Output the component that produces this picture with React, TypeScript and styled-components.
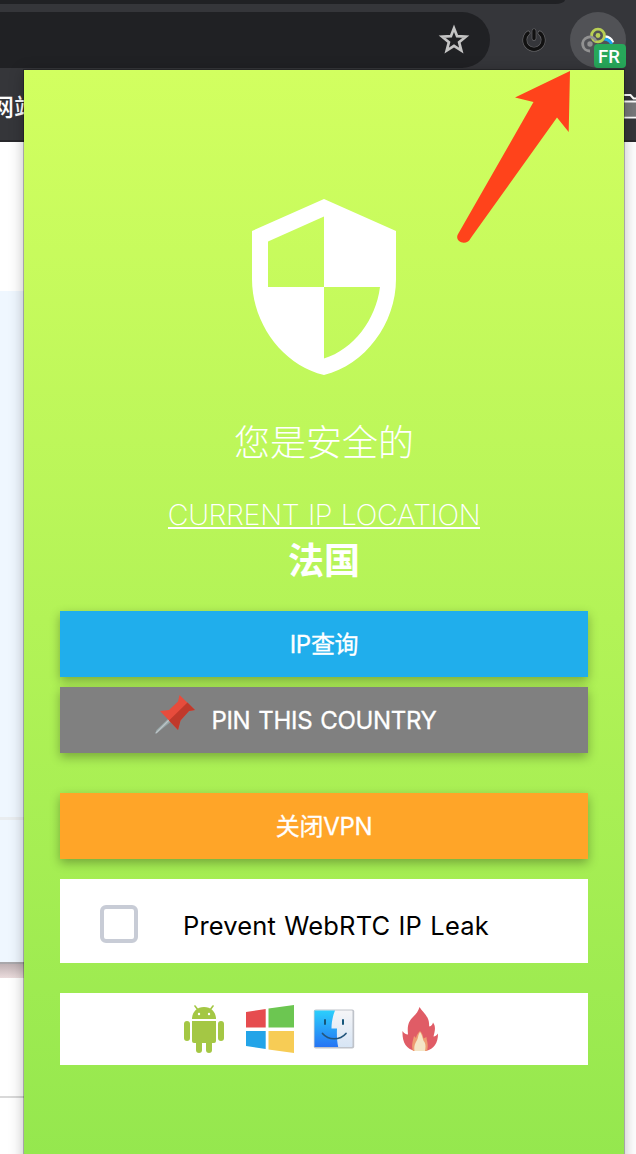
import React from "react";
import styled, { createGlobalStyle } from "styled-components";

const GlobalStyle = createGlobalStyle`
  * { box-sizing: border-box; }
  body {
    margin: 0;
    background: #fff;
    font-family: Inter, "Noto Sans CJK SC", sans-serif;
  }
`;

const Screen = styled.div`
  position: relative;
  width: 636px;
  height: 1154px;
  overflow: hidden;
`;

const Chrome = styled.header`
  height: 142px;
  background: #35363a;
  border-bottom: 2px solid #29292c;
`;

const TabStrip = styled.div`
  width: 565px;
  height: 4px;
  background: #202124;
  border-bottom-right-radius: 10px 4px;
`;

const Toolbar = styled.div`
  display: flex;
  align-items: center;
  height: 56px;
  margin-top: 8px;
`;

const AddressBar = styled.div`
  display: flex;
  align-items: center;
  justify-content: flex-end;
  width: 490px;
  height: 56px;
  padding-right: 20px;
  background: #202124;
  border-radius: 0 28px 28px 0;
`;

const PowerButton = styled.div`
  display: flex;
  margin-left: 30px;
`;

const ExtensionButton = styled.div`
  position: relative;
  width: 56px;
  height: 56px;
  margin-left: 22px;
  border-radius: 50%;
  background: #515256;
  svg { display: block; }
`;

const CountryBadge = styled.span`
  position: absolute;
  right: 0;
  bottom: 0;
  width: 32px;
  height: 24px;
  border-radius: 4px;
  background: #27a85a;
  color: #fff;
  font: 500 18.5px/27px Roboto, sans-serif;
  text-align: center;
  text-indent: -2px;
`;

const Bookmarks = styled.div`
  display: flex;
  justify-content: space-between;
  align-items: center;
  height: 72px;
  padding-top: 6px;
  color: #fff;
  font-size: 24px;
  font-weight: 500;
  line-height: 36px;
`;

const BookmarkName = styled.span`
  margin: 2px 0 0 -10px;
`;

const PageBody = styled.main`
  width: 40px;
  height: 1012px;
  padding-top: 149px;
`;

const BluePanel = styled.div<{ $height: number }>`
  height: ${(p) => p.$height}px;
  background: #eff7ff;
`;

const Rule = styled.div<{ $color: string; $size: number }>`
  height: ${(p) => p.$size}px;
  background: ${(p) => p.$color};
`;

const FadeBand = styled.div`
  height: 14px;
  margin-bottom: 118px;
  background: linear-gradient(#bfb1b4, #eadbdc);
`;

const Popup = styled.section`
  position: absolute;
  top: 70px;
  left: 24px;
  width: 600px;
  height: 1100px;
  padding: 121px 36px 0;
  display: flex;
  flex-direction: column;
  align-items: stretch;
  background: linear-gradient(#d2ff60, #94e74e);
  box-shadow: 0 0 0 1px rgba(0, 0, 0, 0.25), 0 2px 14px rgba(0, 0, 0, 0.28);
  color: #fff;
  text-align: center;
`;

const Shield = styled.svg`
  display: block;
  align-self: center;
  width: 192px;
  height: 192px;
`;

const Status = styled.h1`
  margin: 32px 0 0;
  font-family: "Noto Sans CJK SC", sans-serif;
  font-size: 36px;
  font-weight: 300;
  line-height: 50px;
`;

const LocationLabel = styled.div`
  display: flex;
  justify-content: center;
  height: 34px;
  margin-top: 31px;
  font-size: 28.6px;
  font-weight: 200;
  line-height: 38px;
  letter-spacing: -0.35px;
  word-spacing: 1px;
  white-space: nowrap;
  span { height: 33px; border-bottom: 2px solid #fff; }
`;

const Country = styled.div`
  margin-top: 5px;
  font-size: 36px;
  font-weight: 700;
  line-height: 52px;
`;

const ActionButton = styled.button<{ $color: string; $top: number }>`
  display: flex;
  align-items: center;
  justify-content: center;
  gap: 15px;
  height: 66px;
  flex: none;
  margin: ${(p) => p.$top}px 0 0;
  padding: 2px 0 0;
  border: 0;
  background: ${(p) => p.$color};
  box-shadow: 0 4px 10px rgba(0, 0, 0, 0.3);
  color: #fff;
  font: 400 24px/36px Inter, "Noto Sans CJK SC", sans-serif;
  letter-spacing: -0.3px;
  word-spacing: 1.5px;
  -webkit-text-stroke: 0.3px #fff;
  white-space: nowrap;
`;

const PinIcon = styled.svg`
  margin: -13px 0 0 -57px;
`;

const LeakOption = styled.label`
  display: flex;
  align-items: center;
  gap: 45px;
  height: 84px;
  margin-top: 20px;
  padding: 6px 0 0 40px;
  background: #fff;
  color: #000;
  font-size: 25.5px;
  letter-spacing: 0.15px;
  word-spacing: 1px;
  white-space: nowrap;
  span { padding-top: 2px; }
`;

const Checkbox = styled.input`
  appearance: none;
  width: 38px;
  height: 38px;
  margin: 0;
  border: 4px solid #c8ccd6;
  border-radius: 6px;
  background: #fff;
`;

const Platforms = styled.nav`
  display: flex;
  align-items: center;
  height: 72px;
  margin-top: 30px;
  padding-left: 124px;
  background: #fff;
`;

const PlatformIcon = styled.svg<{ $gap: number }>`
  display: block;
  flex: none;
  margin-left: ${(p) => p.$gap}px;
`;

const Pointer = styled.svg`
  position: absolute;
  top: 68px;
  left: 450px;
`;

const FolderIcon = styled.svg`
  display: block;
  margin-right: -6px;
`;

export default function App() {
  return (
    <Screen>
      <GlobalStyle />
      <Chrome>
        <TabStrip />
        <Toolbar>
          <AddressBar>
            <svg width="32" height="32" viewBox="0 0 32 32" fill="none" stroke="#c4c4c4" strokeWidth="2.7">
              <path d="M16 4.2 19.1 12.2 27.8 12.7 21.1 18.2 23.3 26.6 16 21.9 8.7 26.6 10.9 18.2 4.2 12.7 12.9 12.2Z" />
            </svg>
          </AddressBar>
          <PowerButton>
            <svg width="28" height="28" viewBox="0 0 28 28" fill="none" strokeLinecap="round">
              <path d="M8.1 7a9.2 9.2 0 1 0 11.8 0M14 4.8v7.6" stroke="#6b6b6d" strokeWidth="4.6" />
              <path d="M8.1 7a9.2 9.2 0 1 0 11.8 0M14 4.8v7.6" stroke="#111" strokeWidth="3.4" />
            </svg>
          </PowerButton>
          <ExtensionButton>
            <svg width="56" height="56" viewBox="0 0 56 56" fill="none">
              <path d="M35 24.500a9 9 0 0 1 8 6" stroke="#fff" strokeWidth="2.500" />
              <path d="M34 27a8 8 0 0 1 8 7" stroke="#1aa3ef" strokeWidth="3" />
              <circle cx="28" cy="23.5" r="6.4" stroke="#b9cf55" strokeWidth="2.8" />
              <circle cx="28" cy="23.5" r="2.4" fill="#b9cf55" />
              <path d="M20 39a7 7 0 1 1 6-10" stroke="#929292" strokeWidth="2.8" />
              <circle cx="20" cy="32" r="2.7" fill="#929292" />
            </svg>
            <CountryBadge>FR</CountryBadge>
          </ExtensionButton>
        </Toolbar>
        <Bookmarks>
          <BookmarkName>网站</BookmarkName>
          <FolderIcon width="28" height="28" viewBox="0 0 28 28">
            <path d="M0 9h28v14H0Z" fill="#77787a" />
            <path d="M0 2h16.500l3 3.500H28M0 8.500h28M0 24.500h28" fill="none" stroke="#fff" strokeWidth="2" />
          </FolderIcon>
        </Bookmarks>
      </Chrome>
      <PageBody>
        <BluePanel $height={526} />
        <Rule $color="#e9edf0" $size={3} />
        <BluePanel $height={142} />
        <Rule $color="#a9a7ab" $size={2} />
        <FadeBand />
        <Rule $color="#d9d9d9" $size={2} />
      </PageBody>
      <Popup>
        <Shield viewBox="0 0 24 24">
          <path
            fill="#fff"
            d="M12 1 3 5v6c0 5.55 3.84 10.74 9 12 5.16-1.26 9-6.45 9-12V5l-9-4zm0 10.99h7c-.53 4.12-3.28 7.79-7 8.94V12H5V6.3l7-3.11v8.8z"
          />
        </Shield>
        <Status>您是安全的</Status>
        <LocationLabel>
          <span>CURRENT IP LOCATION</span>
        </LocationLabel>
        <Country>法国</Country>
        <ActionButton $color="#20aeec" $top={24}>IP查询</ActionButton>
        <ActionButton $color="#808080" $top={10}>
          <PinIcon width="42" height="42" viewBox="0 0 42 42">
            <path d="m1 40 1.500-4L16 23l3 3L3 39Z" fill="#95a5a6" />
            <path d="m2 39 14-14" stroke="#bdc3c7" strokeWidth="1.200" />
            <path d="M25.500 1 41 16l-6 1-8.500 9.500L24 36 6 17l9-1 9-8.500Z" fill="#e74c3c" />
            <path d="m33.500 8.500 7.500 7.500-6 1-8.500 9.500L24 36l-9-9.500Z" fill="#c0392b" />
          </PinIcon>
          PIN THIS COUNTRY
        </ActionButton>
        <ActionButton $color="#ffa528" $top={40}>关闭VPN</ActionButton>
        <LeakOption>
          <Checkbox type="checkbox" />
          <span>Prevent WebRTC IP Leak</span>
        </LeakOption>
        <Platforms>
          <PlatformIcon $gap={0} width="40" height="48" viewBox="0 0 40 48" fill="#a4c744">
            <path d="M8 14C8 7 13 2 20 2s12 5 12 12Z" />
            <path d="m11 1 3 4m15-4-3 4" stroke="#a4c744" strokeWidth="1.600" strokeLinecap="round" />
            <path d="M8 16h24v20a2 2 0 0 1-2 2H10a2 2 0 0 1-2-2Z" />
            <rect x="0" y="16" width="6" height="20" rx="3" />
            <rect x="34" y="16" width="6" height="20" rx="3" />
            <rect x="12" y="32" width="6" height="16" rx="3" />
            <rect x="22" y="32" width="6" height="16" rx="3" />
            <circle cx="15" cy="9" r="1.200" fill="#fff" />
            <circle cx="25" cy="9" r="1.200" fill="#fff" />
          </PlatformIcon>
          <PlatformIcon $gap={22} width="48" height="48" viewBox="0 0 48 48">
            <path d="M0 7 19.700 4v18.500H0Z" fill="#e64c4f" />
            <path d="M22.500 3.500 48 0v22.500H22.500Z" fill="#6cc651" />
            <path d="M0 26h19.700v18L0 41Z" fill="#23a4e8" />
            <path d="M22.500 26H48v22l-25.500-3.500Z" fill="#f7cc55" />
          </PlatformIcon>
          <PlatformIcon $gap={19} width="42" height="42" viewBox="0 0 42 42">
            <defs>
              <linearGradient id="face" x1="0" y1="0" x2="0" y2="1">
                <stop stopColor="#2bcffc" />
                <stop offset="1" stopColor="#2674f4" />
              </linearGradient>
              <linearGradient id="side" x1="0" y1="0" x2="0" y2="1">
                <stop stopColor="#f5f5f7" />
                <stop offset="1" stopColor="#d7e5f5" />
              </linearGradient>
            </defs>
            <rect x=".8" y="1.500" width="40.400" height="39" rx="2" fill="#bfc3ca" />
            <rect x="1.800" y="2.500" width="37.700" height="36.500" rx="1" fill="url(#side)" />
            <path d="M1.500 2.500H22c-2 5-3.500 11-3.500 18H24c-.3 7 0 13 1.200 18.500H1.500Z" fill="url(#face)" />
            <path d="M12 12v4M30 12v4" stroke="#16577b" strokeWidth="2" strokeLinecap="round" />
            <path d="M9.500 25.500c6 7 17.500 7 23.500 0" fill="none" stroke="#24567c" strokeWidth="1.700" strokeLinecap="round" />
          </PlatformIcon>
          <PlatformIcon $gap={46} width="38" height="48" viewBox="0 0 38 48">
            <path
              d="M18.500 2c3 5 9 9 9.500 16 .2 2 0 3 .5 3.500 2-.5 3-2 3.500-4 3 4 2 8 .500 14 2 0 3.500-1.500 4.500-3C37 38 33 44 25 46H14C5 44 1 37 1.500 26c1.500 2 3 3.500 5.500 3.500C6 20 8 16 12 12c3-3 5.500-6 6.500-10Z"
              fill="#e05c66"
            />
            <path
              d="M19 26c2 2 3 4 3.500 7.500l3-1.500c0 4 2.500 7 .5 14H12c-2-6 0-10 1-15l2 2c.5-3 2-5 4-7Z"
              fill="#ee9c71"
            />
            <path d="M19 27c3 4 2.500 8 4.500 10 1.500 3 1 6 .5 9H13.500c-.5-5 0-6 2-10 2-3 1-5 3.500-9Z" fill="#f4e5c6" />
          </PlatformIcon>
        </Platforms>
      </Popup>
      <Pointer width="124" height="178" viewBox="0 0 124 178">
        <path
          d="M120 3 65 29.500 83.500 34 7.800 166.500C5 172 12 177 18 173.500Q19 173 21.500 169L107 49.500 118.700 64Z"
          fill="#ff431b"
        />
      </Pointer>
    </Screen>
  );
}
